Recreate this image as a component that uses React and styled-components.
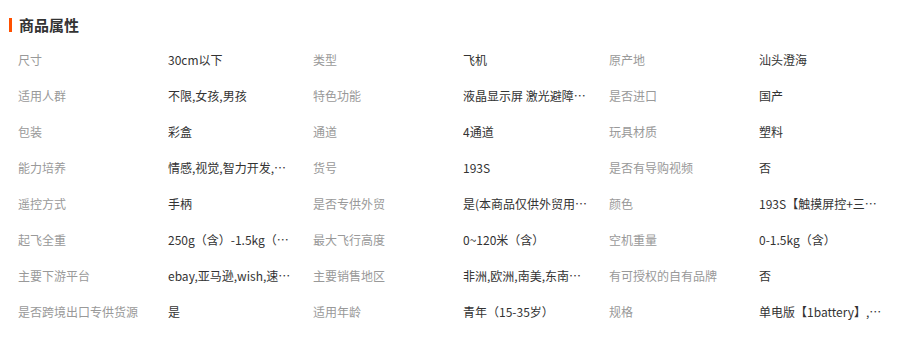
import React from "react";
import styled, { createGlobalStyle } from "styled-components";

const Global = createGlobalStyle`
  html, body { margin: 0; padding: 0; background: #fff; }
  body { font-family: "Noto Sans CJK SC", "Noto Sans", sans-serif; }
`;

const Panel = styled.section`
  padding: 16px 0 0 9px;
  width: 904px;
  box-sizing: border-box;
`;

const Title = styled.h2`
  margin: 0 0 8px 0;
  display: flex;
  align-items: center;
  height: 18px;
  font-size: 15px;
  font-weight: 700;
  color: #333;
  line-height: 18px;
  &::before {
    content: "";
    display: block;
    width: 3px;
    height: 14px;
    background: #ff5000;
    margin-right: 7px;
  }
`;

const Grid = styled.div`
  display: grid;
  grid-template-columns: 295px 296px 295px;
  padding-left: 9px;
`;

const Cell = styled.div`
  display: flex;
  height: 36px;
  align-items: center;
  font-size: 12px;
  line-height: 18px;
  min-width: 0;
`;

const Label = styled.span`
  flex: 0 0 150px;
  color: #999;
  white-space: nowrap;
`;

const Value = styled.span`
  width: 125px;
  color: #333;
  white-space: nowrap;
  overflow: hidden;
  text-overflow: ellipsis;
`;

const data = [
  ["尺寸", "30cm以下"],
  ["类型", "飞机"],
  ["原产地", "汕头澄海"],
  ["适用人群", "不限,女孩,男孩"],
  ["特色功能", "液晶显示屏 激光避障 智能跟随"],
  ["是否进口", "国产"],
  ["包装", "彩盒"],
  ["通道", "4通道"],
  ["玩具材质", "塑料"],
  ["能力培养", "情感,视觉,智力开发,动手能力"],
  ["货号", "193S"],
  ["是否有导购视频", "否"],
  ["遥控方式", "手柄"],
  ["是否专供外贸", "是(本商品仅供外贸用途)"],
  ["颜色", "193S【触摸屏控+三电池】"],
  ["起飞全重", "250g（含）-1.5kg（含）"],
  ["最大飞行高度", "0~120米（含）"],
  ["空机重量", "0-1.5kg（含）"],
  ["主要下游平台", "ebay,亚马逊,wish,速卖通"],
  ["主要销售地区", "非洲,欧洲,南美,东南亚,北美,中东"],
  ["有可授权的自有品牌", "否"],
  ["是否跨境出口专供货源", "是"],
  ["适用年龄", "青年（15-35岁）"],
  ["规格", "单电版【1battery】,双电版"],
];

export default function App() {
  return (
    <>
      <Global />
      <Panel>
        <Title>商品属性</Title>
        <Grid>
          {data.map(([k, v]) => (
            <Cell key={k}>
              <Label>{k}</Label>
              <Value>{v}</Value>
            </Cell>
          ))}
        </Grid>
      </Panel>
    </>
  );
}
